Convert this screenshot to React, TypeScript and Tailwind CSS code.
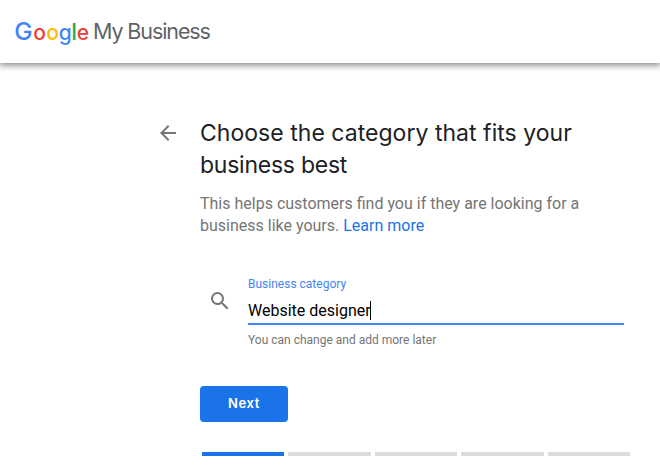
const logo = [
  { letter: "G", style: "w-[19px] text-[24.5px] text-[#4285f4]" },
  { letter: "o", style: "w-[13px] text-[21px] text-[#ea4335]" },
  { letter: "o", style: "w-[13px] text-[21px] text-[#fbbc05]" },
  { letter: "g", style: "w-[12.5px] text-[21px] text-[#4285f4]" },
  { letter: "l", style: "w-[5.5px] text-[23px] text-[#34a853]" },
  { letter: "e", style: "w-[12px] text-[21px] text-[#ea4335]" },
];

function Header() {
  return (
    <header className="flex h-[63px] items-center bg-white pl-[14px] font-['Inter',sans-serif] shadow-[0_1px_7px_1px_rgba(0,0,0,0.5)]">
      <div className="mb-[2px] flex h-8 items-baseline leading-[32px] font-[550]">
        {logo.map(({ letter, style }, i) => (
          <span key={i} className={`flex justify-center ${style}`}>
            {letter}
          </span>
        ))}
      </div>
      <span className="mb-[2px] ml-[4px] text-[21.5px] leading-[32px] tracking-[-1.1px] whitespace-nowrap text-[#5f6368]">My Business</span>
    </header>
  );
}

function Progress() {
  return (
    <div className="mt-[30px] ml-[2px] flex h-1 w-[428px] gap-1">
      {[0, 1, 2, 3, 4].map((step) => (
        <div key={step} className={`flex-1 ${step === 0 ? "bg-[#1a73e8]" : "bg-[#dadce0]"}`} />
      ))}
    </div>
  );
}

export default function App() {
  return (
    <div className="h-[475px] w-[660px] overflow-hidden bg-white font-['Roboto',sans-serif]">
      <Header />
      <main className="flex pt-[54px] pl-[156px]">
        <button aria-label="Back" className="mt-1 h-6 w-6 shrink-0 text-[#757575]">
          <svg viewBox="0 0 24 24" className="h-6 w-6" fill="currentColor">
            <path d="M20 11H7.83l5.59-5.59L12 4l-8 8 8 8 1.41-1.41L7.83 13H20v-2z" />
          </svg>
        </button>
        <section className="ml-5 w-[430px]">
          <h1 className="font-['Inter',sans-serif] text-[23px] leading-8 tracking-[0.03px] whitespace-nowrap text-[#202124]">
            Choose the category that fits your
            <br />
            <span className="tracking-[-0.25px]">business best</span>
          </h1>
          <p className="mt-[12px] text-[16px] leading-[22px] whitespace-nowrap text-[#757575]">
            This helps customers find you if they are looking for a
            <br />
            business like yours. <a className="text-[#1a73e8]">Learn more</a>
          </p>
          <div className="mt-[39px] flex">
            <svg viewBox="0 0 24 24" className="mt-[13px] ml-2 h-6 w-6 shrink-0 text-[#757575]" fill="currentColor">
              <path d="M15.5 14h-.79l-.28-.27A6.471 6.471 0 0 0 16 9.5 6.5 6.5 0 1 0 9.5 16c1.61 0 3.09-.59 4.23-1.57l.27.28v.79l5 4.99L20.49 19l-4.99-5zm-6 0C7.01 14 5 11.99 5 9.5S7.01 5 9.5 5 14 7.01 14 9.5 11.99 14 9.5 14z" />
            </svg>
            <div className="ml-4 w-[376px]">
              <div className="text-[12px] leading-4 text-[#4285f4]">Business category</div>
              <div className="mt-2 flex h-[25px] items-start border-b-2 border-[#4285f4] text-[16px] leading-[21px] text-black">
                <span>Website designer</span>
                <span className="-ml-px mt-px h-[19px] w-px bg-black" />
              </div>
              <div className="mt-[7px] text-[12px] leading-4 text-[#757575]">You can change and add more later</div>
            </div>
          </div>
          <button className="mt-[38px] flex h-9 w-[88px] items-center justify-center rounded-[4px] bg-[#1a73e8] font-['Inter',sans-serif] text-[13px] font-semibold tracking-[0.6px] text-white">
            Next
          </button>
          <Progress />
        </section>
      </main>
    </div>
  );
}
